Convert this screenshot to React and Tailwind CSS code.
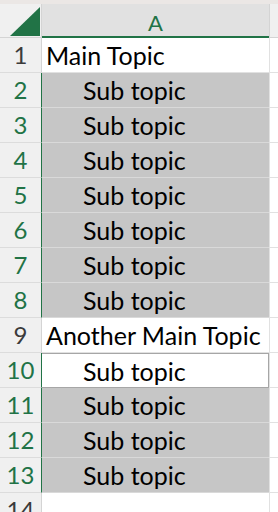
const rows = [
  { n: 1, text: 'Main Topic', sub: false, sel: false },
  { n: 2, text: 'Sub topic', sub: true, sel: true },
  { n: 3, text: 'Sub topic', sub: true, sel: true },
  { n: 4, text: 'Sub topic', sub: true, sel: true },
  { n: 5, text: 'Sub topic', sub: true, sel: true },
  { n: 6, text: 'Sub topic', sub: true, sel: true },
  { n: 7, text: 'Sub topic', sub: true, sel: true },
  { n: 8, text: 'Sub topic', sub: true, sel: true },
  { n: 9, text: 'Another Main Topic', sub: false, sel: false },
  { n: 10, text: 'Sub topic', sub: true, sel: true, active: true },
  { n: 11, text: 'Sub topic', sub: true, sel: true },
  { n: 12, text: 'Sub topic', sub: true, sel: true },
  { n: 13, text: 'Sub topic', sub: true, sel: true },
  { n: 14, text: '', sub: false, sel: false },
];

function Row({ row }) {
  let cell = 'bg-white border-b border-[#e1e1e1]';
  if (row.sel) cell = 'bg-[#c6c6c6] border-b border-[#d9d9d9]';
  if (row.active) cell = 'bg-white border-y border-r border-[#a6a6a6]';

  return (
    <div className="flex h-[35px] shrink-0">
      <div
        className={`w-[42px] shrink-0 flex items-center justify-center bg-[#f0f0f0] border-b border-[#dcdcdc] border-r leading-[34px] text-[24px] ${
          row.sel ? 'border-r-[#217346] text-[#217346]' : 'border-r-[#d4d4d4] text-[#3b3b3b]'
        }`}
      >
        {row.n}
      </div>
      <div
        className={`w-[227px] shrink-0 flex items-center leading-[34px] text-[25px] text-black whitespace-nowrap ${cell} ${
          row.sub ? 'pl-[41px]' : 'pl-[4px]'
        }`}
      >
        {row.text}
      </div>
      <div className="w-[1px] shrink-0 bg-[#e1e1e1]" />
      <div className="flex-1 bg-white border-b border-[#e1e1e1]" />
    </div>
  );
}

export default function App() {
  return (
    <div className="w-[278px] h-[512px] overflow-hidden bg-white flex flex-col font-['Lato',sans-serif]">
      {/* ribbon edge */}
      <div className="h-[4px] shrink-0 bg-[#ebe7e5]" />

      {/* column header */}
      <div className="flex h-[34px] shrink-0">
        <div className="w-[42px] shrink-0 bg-[#f0f0f0] border-r border-[#d4d4d4] border-b border-b-[#d4d4d4] flex items-end justify-end pr-[1px] pb-[1px]">
          <svg width="30" height="29" viewBox="0 0 30 29">
            <polygon points="0,29 30,29 30,0" fill="#217346" />
          </svg>
        </div>
        <div className="w-[227px] shrink-0 bg-[#e1e1e1] border-b-2 border-[#217346] flex items-end justify-center pb-[2px] leading-[22px] text-[22px] text-[#217346]">
          A
        </div>
        <div className="w-[1px] shrink-0 bg-[#d4d4d4]" />
        <div className="flex-1 bg-[#f0f0f0] border-b border-[#d4d4d4]" />
      </div>

      {rows.map((r) => (
        <Row key={r.n} row={r} />
      ))}
    </div>
  );
}
